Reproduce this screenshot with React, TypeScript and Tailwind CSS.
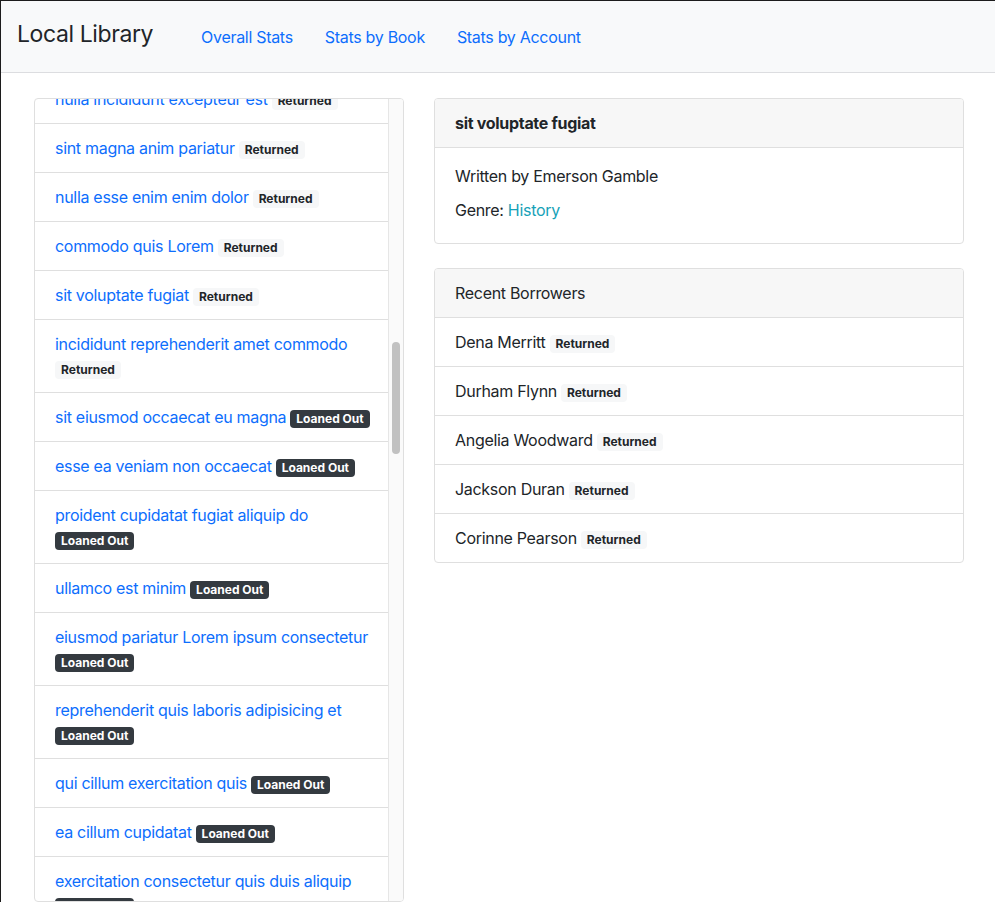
import React, { useLayoutEffect, useRef } from "react";

type Item = { title: string; status: "Returned" | "Loaned Out"; wrap?: boolean };

const words = [
  "lorem", "ipsum", "dolor", "amet", "elit", "sed", "tempor", "labore", "dolore",
  "aliqua", "enim", "minim", "veniam", "quis", "nostrud", "ullamco", "nisi",
  "commodo", "duis", "aute", "irure", "velit", "esse", "cillum", "fugiat",
  "nulla", "sint", "occaecat", "proident", "sunt", "culpa", "qui", "officia",
  "mollit", "anim", "est", "laborum",
];

function title(i: number, long: boolean): string {
  const n = long ? 5 : 3;
  const out: string[] = [];
  for (let k = 0; k < n; k++) out.push(words[(i * 7 + k * 11 + 3) % words.length]);
  return out.join(" ");
}

const above: Item[] = Array.from({ length: 33 }, (_, i) => ({
  title: title(i, i % 10 === 3),
  status: "Returned" as const,
  wrap: i % 10 === 3,
}));

const visible: Item[] = [
  { title: "nulla incididunt excepteur est", status: "Returned" },
  { title: "sint magna anim pariatur", status: "Returned" },
  { title: "nulla esse enim enim dolor", status: "Returned" },
  { title: "commodo quis Lorem", status: "Returned" },
  { title: "sit voluptate fugiat", status: "Returned" },
  { title: "incididunt reprehenderit amet commodo", status: "Returned", wrap: true },
  { title: "sit eiusmod occaecat eu magna", status: "Loaned Out" },
  { title: "esse ea veniam non occaecat", status: "Loaned Out" },
  { title: "proident cupidatat fugiat aliquip do", status: "Loaned Out", wrap: true },
  { title: "ullamco est minim", status: "Loaned Out" },
  { title: "eiusmod pariatur Lorem ipsum consectetur", status: "Loaned Out", wrap: true },
  { title: "reprehenderit quis laboris adipisicing et", status: "Loaned Out", wrap: true },
  { title: "qui cillum exercitation quis", status: "Loaned Out" },
  { title: "ea cillum cupidatat", status: "Loaned Out" },
  { title: "exercitation consectetur quis duis aliquip", status: "Loaned Out", wrap: true },
];

const below: Item[] = Array.from({ length: 20 }, (_, i) => ({
  title: title(i + 40, i % 12 === 5),
  status: "Loaned Out" as const,
  wrap: i % 12 === 5,
}));

const borrowers = [
  "Dena Merritt",
  "Durham Flynn",
  "Angelia Woodward",
  "Jackson Duran",
  "Corinne Pearson",
];

function Badge({ status }: { status: "Returned" | "Loaned Out" }) {
  const dark = status === "Loaned Out";
  return (
    <span
      className={
        "inline-block align-baseline leading-none px-[6px] pt-[3px] pb-[3px] text-[12px] font-bold tracking-normal rounded-[4px] whitespace-nowrap " +
        (dark ? "bg-[#343a40] text-white" : "bg-[#f6f7f8] text-[#212529]")
      }
    >
      {status}
    </span>
  );
}

function BookRow({ item, anchorRef }: { item: Item; anchorRef?: React.Ref<HTMLDivElement> }) {
  return (
    <div ref={anchorRef} className="px-5 py-3 border-b border-[#dfdfdf] leading-6">
      {item.wrap ? (
        <>
          <div>
            <a className="text-[#0d6efd]">{item.title}</a>
          </div>
          <div>
            <Badge status={item.status} />
          </div>
        </>
      ) : (
        <div className="whitespace-nowrap">
          <a className="text-[#0d6efd]">{item.title}</a>
          <span className="ml-[4px]">
            <Badge status={item.status} />
          </span>
        </div>
      )}
    </div>
  );
}

export default function App() {
  const scrollRef = useRef<HTMLDivElement>(null);
  const anchorRef = useRef<HTMLDivElement>(null);

  useLayoutEffect(() => {
    const s = scrollRef.current;
    const a = anchorRef.current;
    if (s && a) s.scrollTop = a.offsetTop + 24;
  }, []);

  return (
    <div
      className="border-t border-l border-[#1c1c1c] bg-white text-[#212529] text-[16px] leading-6 tracking-[-0.3px]"
      style={{ fontFamily: "Inter, 'Liberation Sans', sans-serif" }}
    >
      <nav className="h-[72px] bg-[#f8f9fa] border-b border-[#dcdde0] flex items-center px-4">
        <span className="text-[23px] leading-9 tracking-[-0.4px] text-[#212529] -mt-[5px]">Local Library</span>
        <div className="flex items-center ml-[48px]">
          <a className="text-[#0d6efd]">Overall Stats</a>
          <a className="text-[#0d6efd] ml-[32px]">Stats by Book</a>
          <a className="text-[#0d6efd] ml-[32px]">Stats by Account</a>
        </div>
      </nav>

      <main className="flex items-start pl-[33px] pt-[25px] gap-[30px]">
        <div className="w-[370px] h-[804px] border border-[#dfdfdf] rounded-[4px] overflow-hidden flex">
          <div ref={scrollRef} className="relative flex-1 h-full overflow-hidden">
            {above.map((it, i) => (
              <BookRow key={"a" + i} item={it} />
            ))}
            {visible.map((it, i) => (
              <BookRow key={"v" + i} item={it} anchorRef={i === 0 ? anchorRef : undefined} />
            ))}
            {below.map((it, i) => (
              <BookRow key={"b" + i} item={it} />
            ))}
          </div>
          <div className="w-[15px] h-full shrink-0 bg-[#fafafa] border-l border-[#e6e6e6] pt-[243px] pl-[3px]">
            <div className="w-[8px] h-[112px] rounded-full bg-[#c1c1c1]" />
          </div>
        </div>

        <div className="w-[530px] flex flex-col gap-[24px]">
          <div className="border border-[#dfdfdf] rounded-[4px] overflow-hidden">
            <div className="bg-[#f7f7f7] px-5 py-3 border-b border-[#dfdfdf] font-bold">
              sit voluptate fugiat
            </div>
            <div className="px-5 pt-4 pb-[21px]">
              <div>Written by Emerson Gamble</div>
              <div className="mt-[10px]">
                Genre: <a className="text-[#17a2b8]">History</a>
              </div>
            </div>
          </div>

          <div className="border border-[#dfdfdf] rounded-[4px] overflow-hidden">
            <div className="bg-[#f7f7f7] px-5 py-3 border-b border-[#dfdfdf]">Recent Borrowers</div>
            {borrowers.map((b, i) => (
              <div
                key={b}
                className={
                  "px-5 py-3 whitespace-nowrap " +
                  (i < borrowers.length - 1 ? "border-b border-[#dfdfdf]" : "")
                }
              >
                {b}
                <span className="ml-[4px]">
                  <Badge status="Returned" />
                </span>
              </div>
            ))}
          </div>
        </div>
      </main>
    </div>
  );
}
